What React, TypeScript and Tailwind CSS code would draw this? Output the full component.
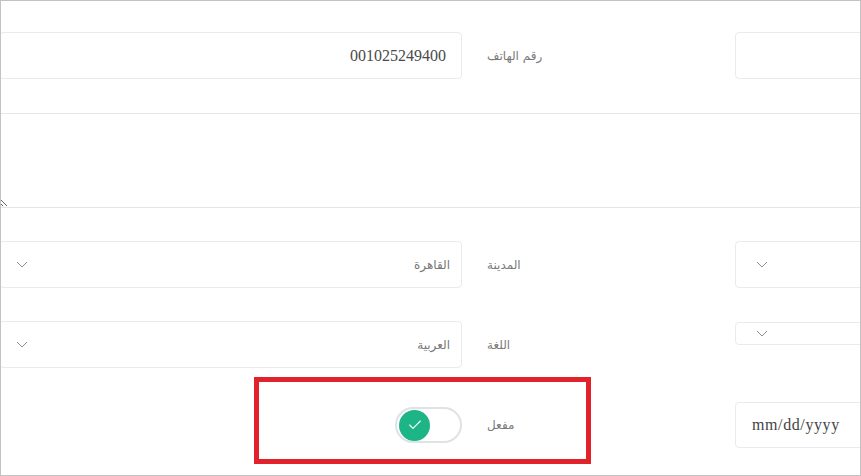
import { Check } from "lucide-react";

const arabic = { fontFamily: '"DejaVu Sans", sans-serif' };

function Chevron() {
  return (
    <svg width="12" height="7" viewBox="0 0 12 7" className="shrink-0">
      <polyline points="1,1 6,6 11,1" fill="none" stroke="#8a8f95" strokeWidth="1" />
    </svg>
  );
}

function Label(props: { text: string }) {
  return (
    <div
      className="ml-[25px] w-[248px] shrink-0 text-left text-[12px] text-[#7a7a7a]"
      style={arabic}
    >
      <span dir="rtl">{props.text}</span>
    </div>
  );
}

function SelectBox(props: { value: string }) {
  return (
    <div className="-ml-[2px] flex h-[47px] w-[463px] shrink-0 items-center justify-between rounded-[4px] border border-[#e8eaed] pl-[16px] pr-[11px]">
      <Chevron />
      <span dir="rtl" className="text-[12px] text-[#777]" style={arabic}>
        {props.value}
      </span>
    </div>
  );
}

export default function App() {
  return (
    <div className="relative h-[476px] w-[861px] overflow-hidden border border-[#c2c2c2] bg-white">
      <div className="flex flex-col gap-[34px] pt-[31px]">
        <div className="flex items-center">
          <div className="-ml-[2px] flex h-[47px] w-[463px] shrink-0 items-center justify-end rounded-[4px] border border-[#e8eaed] pr-[15px] font-['Liberation_Serif',serif] text-[16px] text-[#4a4a4a]">
            001025249400
          </div>
          <Label text="رقم الهاتف" />
          <div className="h-[47px] w-[160px] shrink-0 rounded-[4px] border border-[#e8eaed]" />
        </div>

        <textarea
          dir="rtl"
          className="-ml-[2px] block h-[95px] w-[880px] resize-y border-y border-[#e6e6e6] outline-none"
        />

        <div className="-mt-px flex items-center">
          <SelectBox value="القاهرة" />
          <Label text="المدينة" />
          <div className="flex h-[47px] w-[160px] shrink-0 items-center rounded-[4px] border border-[#e8eaed] pl-[20px]">
            <Chevron />
          </div>
        </div>

        <div className="-mt-px flex items-center">
          <SelectBox value="العربية" />
          <Label text="اللغة" />
          <div className="-mt-[22px] flex h-[23px] w-[160px] shrink-0 items-center rounded-[4px] border border-[#e8eaed] pl-[20px]">
            <Chevron />
          </div>
        </div>

        <div className="flex items-center">
          <div className="-ml-[2px] flex w-[463px] shrink-0 justify-end">
            <div className="flex h-[36px] w-[67px] items-center rounded-full border-2 border-[#dfe2e6] bg-white pl-[2px]">
              <div className="flex h-[31px] w-[31px] items-center justify-center rounded-full bg-[#1db586]">
                <Check size={16} color="white" strokeWidth={1.6} />
              </div>
            </div>
          </div>
          <Label text="مفعل" />
          <div className="flex h-[46px] w-[160px] shrink-0 items-center rounded-[4px] border border-[#e8eaed] pl-[16px] font-['Liberation_Serif',serif] text-[16px] tracking-[0.6px] text-[#444]">
            mm/dd/yyyy
          </div>
        </div>
      </div>

      <div className="absolute left-[253px] top-[376px] h-[87px] w-[337px] border-[5px] border-[#e2222a]" />
    </div>
  );
}
